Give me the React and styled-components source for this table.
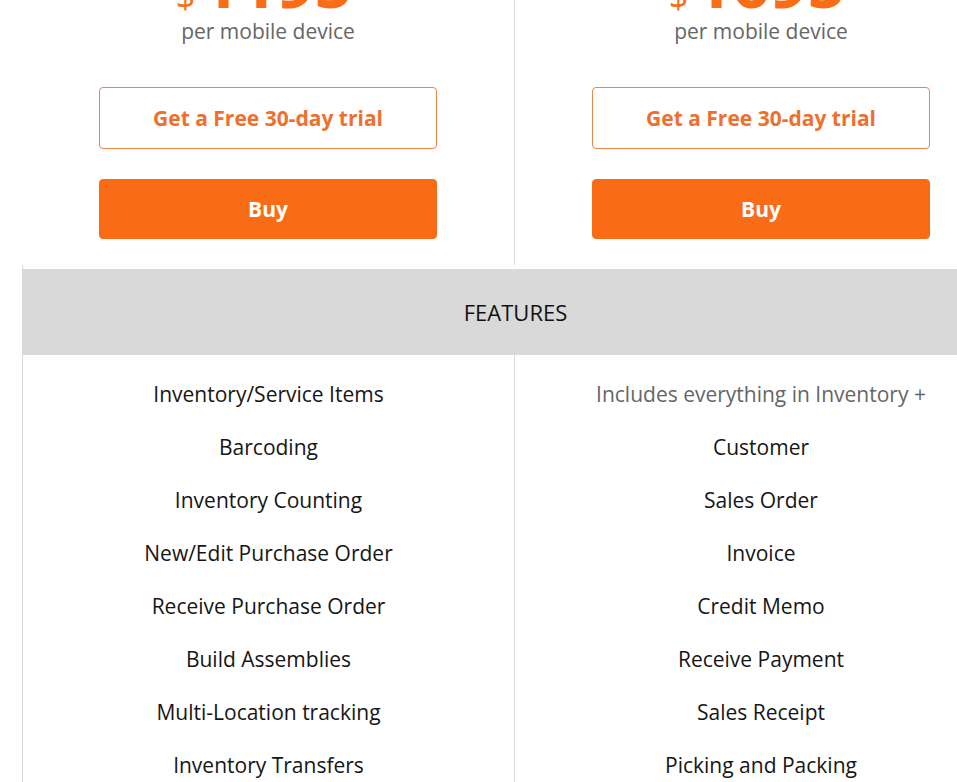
import React from "react";
import styled, { createGlobalStyle } from "styled-components";

const GlobalStyle = createGlobalStyle`
  html, body {
    margin: 0;
    padding: 0;
    background: #ffffff;
    overflow: hidden;
    font-family: "Open Sans", "Noto Sans", sans-serif;
  }
`;

const Page = styled.div`
  width: 986px;
  margin-left: 22px;
`;

const PlanRow = styled.div`
  display: grid;
  grid-template-columns: 493px 493px;
`;

const PlanColumn = styled.div`
  display: flex;
  flex-direction: column;
  align-items: center;
  padding-bottom: 26px;
  border-right: 1px solid #d9d9d9;
`;

const Price = styled.div`
  margin-top: -50px;
  height: 64px;
  font-size: 66px;
  line-height: 64px;
  font-weight: 700;
  color: #f96d17;
  display: flex;
  align-items: baseline;
  padding-right: 8px;

  span {
    font-size: 34px;
    font-weight: 400;
    margin-right: 6px;
  }
`;

const PerDevice = styled.div`
  margin-top: 3px;
  font-size: 21px;
  line-height: 28px;
  color: #666666;
`;

const Button = styled.button`
  box-sizing: border-box;
  width: 338px;
  height: ${({ $outline }) => ($outline ? "62px" : "60px")};
  margin-top: ${({ $outline }) => ($outline ? "42px" : "30px")};
  border-radius: 4px;
  border: 1px solid ${({ $outline }) => ($outline ? "#e9864c" : "#fa6b15")};
  background: ${({ $outline }) => ($outline ? "#ffffff" : "#fa6b15")};
  color: ${({ $outline }) => ($outline ? "#ee7030" : "#ffffff")};
  font-family: "Open Sans", "Noto Sans", sans-serif;
  font-size: 21px;
  font-weight: 700;
  cursor: pointer;
`;

const Features = styled.div`
  border-left: 1px solid #d9d9d9;
  padding-top: 4px;
`;

const Band = styled.div`
  height: 86px;
  background: #d9d9d9;
  display: flex;
  align-items: center;
  justify-content: center;
  font-size: 22px;
  color: #111111;
`;

const FeatureGrid = styled.div`
  display: grid;
  grid-template-columns: 492px 493px;
`;

const FeatureColumn = styled.div`
  display: flex;
  flex-direction: column;
  align-items: center;
  padding-top: 13px;
  border-right: 1px solid #d9d9d9;
`;

const Feature = styled.div`
  height: 53px;
  line-height: 53px;
  font-size: 21px;
  color: ${({ $muted }) => ($muted ? "#666666" : "#161616")};
  white-space: nowrap;
`;

const plans = [{ price: "1195" }, { price: "1695" }];

const left = [
  "Inventory/Service Items",
  "Barcoding",
  "Inventory Counting",
  "New/Edit Purchase Order",
  "Receive Purchase Order",
  "Build Assemblies",
  "Multi-Location tracking",
  "Inventory Transfers",
];

const right = [
  "Customer",
  "Sales Order",
  "Invoice",
  "Credit Memo",
  "Receive Payment",
  "Sales Receipt",
  "Picking and Packing",
];

export default function App() {
  return (
    <>
      <GlobalStyle />
      <Page>
        <PlanRow>
          {plans.map((p) => (
            <PlanColumn key={p.price}>
              <Price>
                <span>$</span>
                {p.price}
              </Price>
              <PerDevice>per mobile device</PerDevice>
              <Button $outline>Get a Free 30-day trial</Button>
              <Button>Buy</Button>
            </PlanColumn>
          ))}
        </PlanRow>
        <Features>
          <Band>FEATURES</Band>
          <FeatureGrid>
            <FeatureColumn>
              {left.map((f) => (
                <Feature key={f}>{f}</Feature>
              ))}
            </FeatureColumn>
            <FeatureColumn>
              <Feature $muted>Includes everything in Inventory +</Feature>
              {right.map((f) => (
                <Feature key={f}>{f}</Feature>
              ))}
            </FeatureColumn>
          </FeatureGrid>
        </Features>
      </Page>
    </>
  );
}
